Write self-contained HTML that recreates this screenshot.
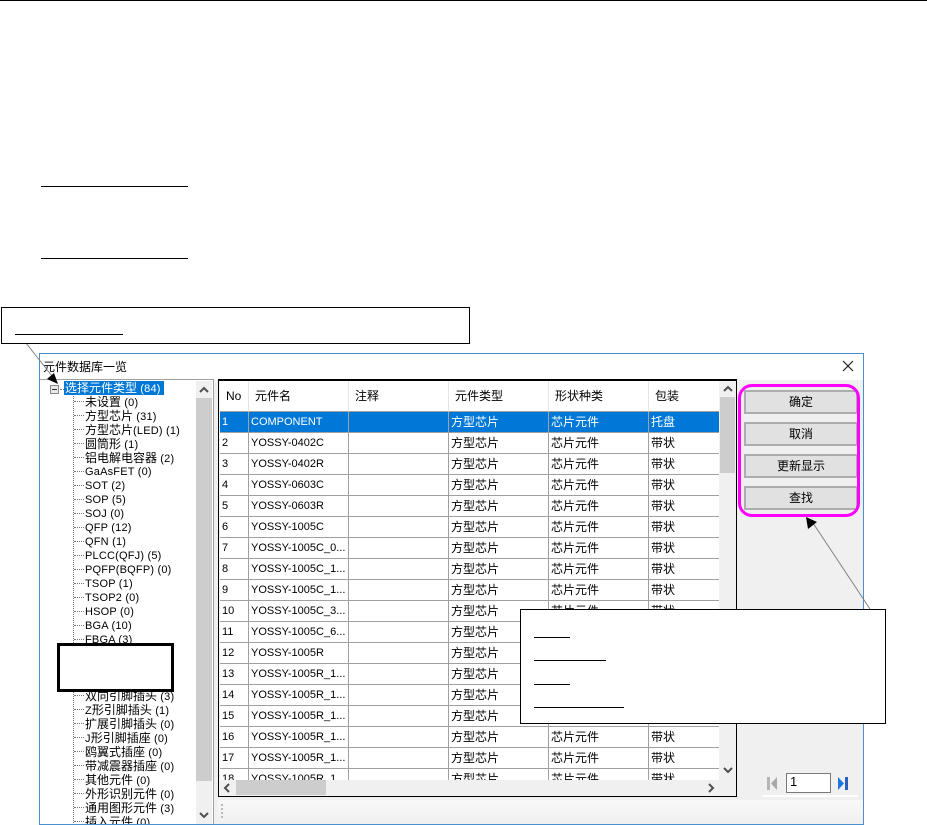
<!DOCTYPE html>
<html><head><meta charset="utf-8">
<style>
html,body{margin:0;padding:0;background:#fff}
#p{position:relative;width:927px;height:825px;overflow:hidden;background:#fff;font:12px/14px "Liberation Sans","WenQuanYi Zen Hei","Noto Sans CJK SC",sans-serif;color:#000}
#p div{position:absolute;box-sizing:border-box}
.ln{background:#000;height:1px}
.t{left:85px;margin-top:1px;white-space:nowrap;height:14px;font-family:"Liberation Sans","WenQuanYi Zen Hei","Noto Sans CJK SC",sans-serif;font-size:11px;letter-spacing:.2px;line-height:14px}
.t b{font-weight:normal;font-size:12px;letter-spacing:0}
.d{left:74px;width:10px;height:0;border-top:1px dotted #777}
.b{left:744px;width:114px;height:24px;background:#e1e1e1;border:2px solid #adadad;text-align:center;line-height:20px}
table{border-collapse:separate;border-spacing:0;table-layout:fixed;width:500px;position:absolute;left:0;top:0}
td,th{box-sizing:border-box;padding:1px 0 0 2px;border-right:1px solid #a0a0a0;border-bottom:1px solid #a0a0a0;height:21px;font-weight:normal;text-align:left;white-space:nowrap;overflow:hidden;font-size:11px;line-height:19px}
th{height:31px;border-right:1px solid #e6e6e6;border-bottom:1px solid #a0a0a0;padding:0 0 0 6px;font-size:12px}
tr.s td{background:#0078d7;color:#fff}
.c{font-size:12px}
</style></head><body>
<div id="p">
<div class="ln" style="left:0;top:0;width:927px"></div>
<div class="ln" style="left:41px;top:186px;width:147px"></div>
<div class="ln" style="left:41px;top:258px;width:147px"></div>

<div style="left:39px;top:353px;width:825px;height:472px;background:#f0f0f0;border:1px solid #4a90cf"></div>
<div style="left:40px;top:354px;width:823px;height:26px;background:#fff"></div>
<div style="left:43px;top:360px;white-space:nowrap">元件数据库一览</div>
<svg style="position:absolute;left:842px;top:360px" width="12" height="12"><path d="M1 1L11 11M11 1L1 11" stroke="#111" stroke-width="1.1" fill="none"/></svg>

<!-- tree -->
<div style="left:40px;top:379px;width:174px;height:445px;background:#fff;border-top:1px solid #a0a0a0;border-right:1px solid #a0a0a0;overflow:hidden">
</div>
<div style="left:41px;top:380px;width:172px;height:444px;overflow:hidden">
<div style="left:-41px;top:-380px;width:927px;height:825px">
<div style="left:50px;top:385px;width:9px;height:9px;border:1px solid #8a8a8a;background:#e8e8e8"></div>
<div style="left:52px;top:389px;width:5px;height:1px;background:#333"></div>
<div style="left:60px;top:389px;width:4px;height:0;border-top:1px dotted #777"></div>
<div style="left:73px;top:394px;width:0;height:431px;border-left:1px dotted #777"></div>
<div style="left:64px;top:381px;width:100px;height:14px;background:#0078d7"></div>
<div class="t" style="left:65px;top:380px;color:#fff"><b>选择元件类型</b> (84)</div>
<div class="d" style="top:401px"></div><div class="t" style="top:394px"><b>未设置</b> (0)</div>
<div class="d" style="top:415px"></div><div class="t" style="top:408px"><b>方型芯片</b> (31)</div>
<div class="d" style="top:429px"></div><div class="t" style="top:422px"><b>方型芯片</b>(LED) (1)</div>
<div class="d" style="top:443px"></div><div class="t" style="top:436px"><b>圆筒形</b> (1)</div>
<div class="d" style="top:457px"></div><div class="t" style="top:450px"><b>铝电解电容器</b> (2)</div>
<div class="d" style="top:471px"></div><div class="t" style="top:464px">GaAsFET (0)</div>
<div class="d" style="top:485px"></div><div class="t" style="top:478px">SOT (2)</div>
<div class="d" style="top:499px"></div><div class="t" style="top:492px">SOP (5)</div>
<div class="d" style="top:513px"></div><div class="t" style="top:506px">SOJ (0)</div>
<div class="d" style="top:527px"></div><div class="t" style="top:520px">QFP (12)</div>
<div class="d" style="top:541px"></div><div class="t" style="top:534px">QFN (1)</div>
<div class="d" style="top:555px"></div><div class="t" style="top:548px">PLCC(QFJ) (5)</div>
<div class="d" style="top:569px"></div><div class="t" style="top:562px">PQFP(BQFP) (0)</div>
<div class="d" style="top:583px"></div><div class="t" style="top:576px">TSOP (1)</div>
<div class="d" style="top:597px"></div><div class="t" style="top:590px">TSOP2 (0)</div>
<div class="d" style="top:611px"></div><div class="t" style="top:604px">HSOP (0)</div>
<div class="d" style="top:625px"></div><div class="t" style="top:618px">BGA (10)</div>
<div class="d" style="top:639px"></div><div class="t" style="top:632px">FBGA (3)</div>
<div class="d" style="top:695px"></div><div class="t" style="top:688px"><b>双向引脚插头</b> (3)</div>
<div class="d" style="top:709px"></div><div class="t" style="top:702px">Z<b>形引脚插头</b> (1)</div>
<div class="d" style="top:723px"></div><div class="t" style="top:716px"><b>扩展引脚插头</b> (0)</div>
<div class="d" style="top:737px"></div><div class="t" style="top:730px">J<b>形引脚插座</b> (0)</div>
<div class="d" style="top:751px"></div><div class="t" style="top:744px"><b>鸥翼式插座</b> (0)</div>
<div class="d" style="top:765px"></div><div class="t" style="top:758px"><b>带减震器插座</b> (0)</div>
<div class="d" style="top:779px"></div><div class="t" style="top:772px"><b>其他元件</b> (0)</div>
<div class="d" style="top:793px"></div><div class="t" style="top:786px"><b>外形识别元件</b> (0)</div>
<div class="d" style="top:807px"></div><div class="t" style="top:800px"><b>通用图形元件</b> (3)</div>
<div class="d" style="top:821px"></div><div class="t" style="top:814px"><b>插入元件</b> (0)</div>
<!-- tree scrollbar -->
<div style="left:196px;top:381px;width:16px;height:443px;background:#f0f0f0"></div>
<div style="left:196px;top:398px;width:16px;height:383px;background:#cdcdcd"></div>
<svg style="position:absolute;left:199px;top:386px" width="10" height="8"><path d="M1 6L5 2L9 6" stroke="#505050" stroke-width="2" fill="none"/></svg>
<svg style="position:absolute;left:199px;top:811px" width="10" height="8"><path d="M1 2L5 6L9 2" stroke="#505050" stroke-width="2" fill="none"/></svg>
</div></div>

<!-- grid -->
<div style="left:218px;top:379px;width:519px;height:418px;border:1px solid #000;border-top-width:2px;background:#f0f0f0"></div>
<div style="left:220px;top:381px;width:499px;height:399px;overflow:hidden;background:#fff">
<table>
<colgroup><col style="width:29px"><col style="width:100px"><col style="width:100px"><col style="width:100px"><col style="width:100px"><col style="width:71px"></colgroup>
<tr><th>No</th><th>元件名</th><th>注释</th><th>元件类型</th><th>形状种类</th><th>包装</th></tr>
<tr class="s"><td>1</td><td>COMPONENT</td><td></td><td class="c">方型芯片</td><td class="c">芯片元件</td><td class="c">托盘</td></tr>
<tr><td>2</td><td>YOSSY-0402C</td><td></td><td class="c">方型芯片</td><td class="c">芯片元件</td><td class="c">带状</td></tr>
<tr><td>3</td><td>YOSSY-0402R</td><td></td><td class="c">方型芯片</td><td class="c">芯片元件</td><td class="c">带状</td></tr>
<tr><td>4</td><td>YOSSY-0603C</td><td></td><td class="c">方型芯片</td><td class="c">芯片元件</td><td class="c">带状</td></tr>
<tr><td>5</td><td>YOSSY-0603R</td><td></td><td class="c">方型芯片</td><td class="c">芯片元件</td><td class="c">带状</td></tr>
<tr><td>6</td><td>YOSSY-1005C</td><td></td><td class="c">方型芯片</td><td class="c">芯片元件</td><td class="c">带状</td></tr>
<tr><td>7</td><td>YOSSY-1005C_0...</td><td></td><td class="c">方型芯片</td><td class="c">芯片元件</td><td class="c">带状</td></tr>
<tr><td>8</td><td>YOSSY-1005C_1...</td><td></td><td class="c">方型芯片</td><td class="c">芯片元件</td><td class="c">带状</td></tr>
<tr><td>9</td><td>YOSSY-1005C_1...</td><td></td><td class="c">方型芯片</td><td class="c">芯片元件</td><td class="c">带状</td></tr>
<tr><td>10</td><td>YOSSY-1005C_3...</td><td></td><td class="c">方型芯片</td><td class="c">芯片元件</td><td class="c">带状</td></tr>
<tr><td>11</td><td>YOSSY-1005C_6...</td><td></td><td class="c">方型芯片</td><td class="c">芯片元件</td><td class="c">带状</td></tr>
<tr><td>12</td><td>YOSSY-1005R</td><td></td><td class="c">方型芯片</td><td class="c">芯片元件</td><td class="c">带状</td></tr>
<tr><td>13</td><td>YOSSY-1005R_1...</td><td></td><td class="c">方型芯片</td><td class="c">芯片元件</td><td class="c">带状</td></tr>
<tr><td>14</td><td>YOSSY-1005R_1...</td><td></td><td class="c">方型芯片</td><td class="c">芯片元件</td><td class="c">带状</td></tr>
<tr><td>15</td><td>YOSSY-1005R_1...</td><td></td><td class="c">方型芯片</td><td class="c">芯片元件</td><td class="c">带状</td></tr>
<tr><td>16</td><td>YOSSY-1005R_1...</td><td></td><td class="c">方型芯片</td><td class="c">芯片元件</td><td class="c">带状</td></tr>
<tr><td>17</td><td>YOSSY-1005R_1...</td><td></td><td class="c">方型芯片</td><td class="c">芯片元件</td><td class="c">带状</td></tr>
<tr><td>18</td><td>YOSSY-1005R_1...</td><td></td><td class="c">方型芯片</td><td class="c">芯片元件</td><td class="c">带状</td></tr>
</table>
</div>
<!-- grid scrollbars -->
<div style="left:720px;top:397px;width:15px;height:76px;background:#cdcdcd"></div>
<svg style="position:absolute;left:723px;top:385px" width="10" height="8"><path d="M1 6L5 2L9 6" stroke="#505050" stroke-width="2" fill="none"/></svg>
<svg style="position:absolute;left:723px;top:766px" width="10" height="8"><path d="M1 2L5 6L9 2" stroke="#505050" stroke-width="2" fill="none"/></svg>
<div style="left:236px;top:780px;width:90px;height:15px;background:#cdcdcd"></div>
<svg style="position:absolute;left:223px;top:783px" width="8" height="10"><path d="M6 1L2 5L6 9" stroke="#505050" stroke-width="2" fill="none"/></svg>
<svg style="position:absolute;left:707px;top:783px" width="8" height="10"><path d="M2 1L6 5L2 9" stroke="#505050" stroke-width="2" fill="none"/></svg>

<!-- buttons -->
<div class="b" style="top:390px">确定</div>
<div class="b" style="top:422px">取消</div>
<div class="b" style="top:454px">更新显示</div>
<div class="b" style="top:486px">查找</div>
<div style="left:738px;top:384px;width:122px;height:133px;border:3px solid #ff00ff;border-radius:14px"></div>

<!-- pager -->
<svg style="position:absolute;left:766px;top:776px" width="12" height="15"><rect x="1" y="1" width="3" height="13" fill="#b4b4b4"/><path d="M11 1V14L5 7.5Z" fill="#a8a8a8"/></svg>
<div style="left:786px;top:773px;width:45px;height:20px;background:#fff;border:1px solid #7a7a7a;line-height:16px;padding-left:3px;font-size:13px">1</div>
<svg style="position:absolute;left:837px;top:776px" width="12" height="15"><path d="M1 1V14L7 7.5Z" fill="#1e78e0"/><rect x="8" y="1" width="3" height="13" fill="#2a5fc0"/></svg>
<div style="left:762px;top:795px;width:96px;height:2px;background:#fff"></div>

<!-- status bar -->
<div style="left:218px;top:800px;width:645px;height:24px;background:linear-gradient(#f8f8f8,#f0f0f0)"></div>
<div style="left:221px;top:804px;width:2px;height:2px;background:#bbb"></div>
<div style="left:221px;top:808px;width:2px;height:2px;background:#bbb"></div>
<div style="left:221px;top:812px;width:2px;height:2px;background:#bbb"></div>
<div style="left:221px;top:816px;width:2px;height:2px;background:#bbb"></div>
<div style="left:214px;top:380px;width:4px;height:444px;background:#f0f0f0"></div>
<div style="left:39px;top:824px;width:825px;height:1px;background:#4a90cf"></div>

<!-- annotation arrows -->
<svg style="position:absolute;left:0;top:0" width="927" height="825">
<path d="M26 343L52 376" stroke="#808080" stroke-width="1" fill="none"/>
<path d="M58 384L47 379L54 373Z" fill="#000"/>
<path d="M813 523L870 609" stroke="#808080" stroke-width="1" fill="none"/>
<path d="M806 517L808 529L817 522Z" fill="#000"/>
</svg>

<!-- callouts -->
<div style="left:1px;top:307px;width:469px;height:37px;background:#fff;border:1px solid #000"></div>
<div class="ln" style="left:15px;top:334px;width:108px"></div>
<div style="left:57px;top:643px;width:117px;height:49px;background:#fff;border:3px solid #000"></div>
<div style="left:520px;top:609px;width:366px;height:115px;background:#fff;border:1px solid #000"></div>
<div class="ln" style="left:534px;top:637px;width:36px"></div>
<div class="ln" style="left:534px;top:660px;width:72px"></div>
<div class="ln" style="left:534px;top:684px;width:36px"></div>
<div class="ln" style="left:534px;top:707px;width:90px"></div>
</div>
</body></html>
